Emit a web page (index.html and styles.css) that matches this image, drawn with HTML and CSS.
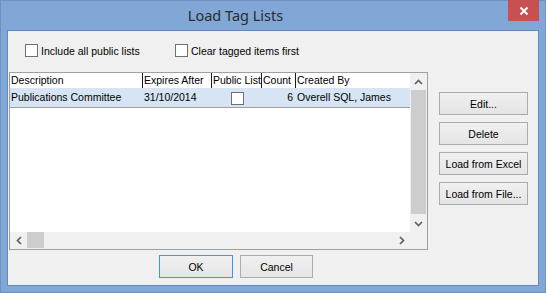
FILE: index.html
```html
<!DOCTYPE html>
<html lang="en">
<head>
  <meta charset="UTF-8" />
  <title>Load Tag Lists</title>
  <link rel="stylesheet" href="styles.css">
</head>
<body>

  <div class="window">
    <div class="titlebar">
      <div class="title">Load Tag Lists</div>
      <div class="close">
        <svg width="10" height="10" viewBox="0 0 10 10"><path d="M1.5 1.5 L8.5 8.5 M8.5 1.5 L1.5 8.5" stroke="#fff" stroke-width="2" fill="none"/></svg>
      </div>
    </div>

    <div class="client">
      <div class="options">
        <label class="option opt-public"><span class="check"></span>Include all public lists</label>
        <label class="option"><span class="check"></span>Clear tagged items first</label>
      </div>

      <div class="main">
        <div class="listbox">
          <div class="table">
            <div class="row head">
              <div class="cell">Description</div>
              <div class="cell">Expires After</div>
              <div class="cell">Public List</div>
              <div class="cell">Count</div>
              <div class="cell last">Created By</div>
            </div>
            <div class="row item">
              <div class="cell">Publications Committee</div>
              <div class="cell">31/10/2014</div>
              <div class="cell box"><span class="check"></span></div>
              <div class="cell num">6</div>
              <div class="cell">Overell SQL, James</div>
            </div>
          </div>

          <div class="vscroll">
            <div class="arrow">
              <svg width="9" height="6" viewBox="0 0 9 6"><path d="M1 5 L4.5 1.5 L8 5" fill="none" stroke="#606060" stroke-width="1.7"/></svg>
            </div>
            <div class="thumb"></div>
            <div class="spacer"></div>
            <div class="arrow">
              <svg width="9" height="6" viewBox="0 0 9 6"><path d="M1 1 L4.5 4.5 L8 1" fill="none" stroke="#606060" stroke-width="1.7"/></svg>
            </div>
          </div>

          <div class="hscroll">
            <div class="arrow">
              <svg width="6" height="9" viewBox="0 0 6 9"><path d="M5 1 L1.5 4.5 L5 8" fill="none" stroke="#606060" stroke-width="1.7"/></svg>
            </div>
            <div class="thumb"></div>
            <div class="spacer"></div>
            <div class="arrow">
              <svg width="6" height="9" viewBox="0 0 6 9"><path d="M1 1 L4.5 4.5 L1 8" fill="none" stroke="#606060" stroke-width="1.7"/></svg>
            </div>
          </div>

          <div class="corner"></div>
        </div>

        <div class="side">
          <button class="btn">Edit...</button>
          <button class="btn">Delete</button>
          <button class="btn">Load from Excel</button>
          <button class="btn">Load from File...</button>
        </div>
      </div>

      <div class="footer">
        <button class="btn default">OK</button>
        <button class="btn">Cancel</button>
      </div>
    </div>
  </div>

</body>
</html>
```

FILE: styles.css
```css
body {
  margin: 0;
  background: #80a7d6;
  font-family: "Liberation Sans", Arial, sans-serif;
  font-size: 10.5px;
  color: #000;
}
.window {
  width: 546px;
  height: 293px;
  box-sizing: border-box;
  border: 1px solid #6c91c2;
  background: #80a7d6;
  display: flex;
  flex-direction: column;
}
.titlebar {
  height: 29px;
  display: flex;
  align-items: flex-start;
}
.title {
  flex: 1;
  text-align: center;
  padding-right: 38px;
  font-family: "Noto Sans", sans-serif;
  font-size: 14.5px;
  line-height: 29px;
  color: #2b2b2b;
}
.close {
  width: 31px;
  height: 21px;
  margin: -1px 6px 0 0;
  background: #c75050;
  display: flex;
  align-items: center;
  justify-content: center;
}
.client {
  flex: 1;
  margin: 0 6px 6px 6px;
  border: 1px solid #6389bb;
  background: #f0f0f0;
  display: flex;
  flex-direction: column;
}

/* options */
.options {
  height: 41px;
  box-sizing: border-box;
  padding: 13px 0 0 17px;
  display: flex;
  align-items: flex-start;
}
.option {
  display: flex;
  align-items: center;
  gap: 3px;
  height: 13px;
}
.opt-public {
  width: 150px;
}
.check {
  display: block;
  width: 13px;
  height: 13px;
  box-sizing: border-box;
  border: 1px solid #707070;
  background: #fff;
}

/* list */
.main {
  display: flex;
  height: 178px;
  padding-left: 1px;
}
.listbox {
  width: 419px;
  box-sizing: border-box;
  border: 1px solid #a0a0a0;
  background: #fff;
  display: grid;
  grid-template-columns: 1fr 17px;
  grid-template-rows: 1fr 17px;
}
.table {
  grid-column: 1;
  grid-row: 1;
}
.row {
  display: grid;
  grid-template-columns: 133px 69px 50px 34px 1fr;
}
.cell {
  box-sizing: border-box;
  padding-left: 1px;
  white-space: nowrap;
  overflow: hidden;
}
.head {
  height: 15px;
  line-height: 15px;
}
.head .cell {
  border-right: 1px solid #1a1a1a;
}
.head .cell.last {
  border-right: none;
}
.item {
  height: 20px;
  box-sizing: border-box;
  border-bottom: 1px solid #a0a0a0;
  background: #d6e4f3;
  line-height: 19px;
}
.item .box {
  display: flex;
  justify-content: center;
  padding-top: 4px;
}
.item .num {
  text-align: right;
  padding-right: 3px;
}

/* scrollbars */
.vscroll {
  grid-column: 2;
  grid-row: 1;
  background: #f0f0f0;
  display: flex;
  flex-direction: column;
}
.vscroll .arrow {
  height: 17px;
}
.vscroll .thumb {
  height: 124px;
  margin: 0 1px;
  background: #cdcdcd;
}
.hscroll {
  grid-column: 1;
  grid-row: 2;
  background: #f0f0f0;
  display: flex;
}
.hscroll .arrow {
  width: 17px;
}
.hscroll .thumb {
  width: 17px;
  margin-bottom: 1px;
  background: #cdcdcd;
}
.arrow {
  display: flex;
  align-items: center;
  justify-content: center;
}
.spacer {
  flex: 1;
}
.corner {
  grid-column: 2;
  grid-row: 2;
  background: #f0f0f0;
}

/* buttons */
.side {
  margin-left: 11px;
  width: 89px;
  padding-top: 20px;
  display: flex;
  flex-direction: column;
  gap: 7px;
}
.btn {
  height: 23px;
  padding: 0;
  border: 1px solid #acacac;
  background: linear-gradient(#f0f0f0, #e5e5e5);
  font-family: "Liberation Sans", Arial, sans-serif;
  font-size: 10.5px;
  color: #000;
}
.btn.default {
  border-color: #3399ff;
}
.footer {
  padding: 5px 0 0 151px;
  display: flex;
  gap: 7px;
}
.footer .btn {
  width: 73px;
}
.footer .btn.default {
  width: 74px;
}
```
